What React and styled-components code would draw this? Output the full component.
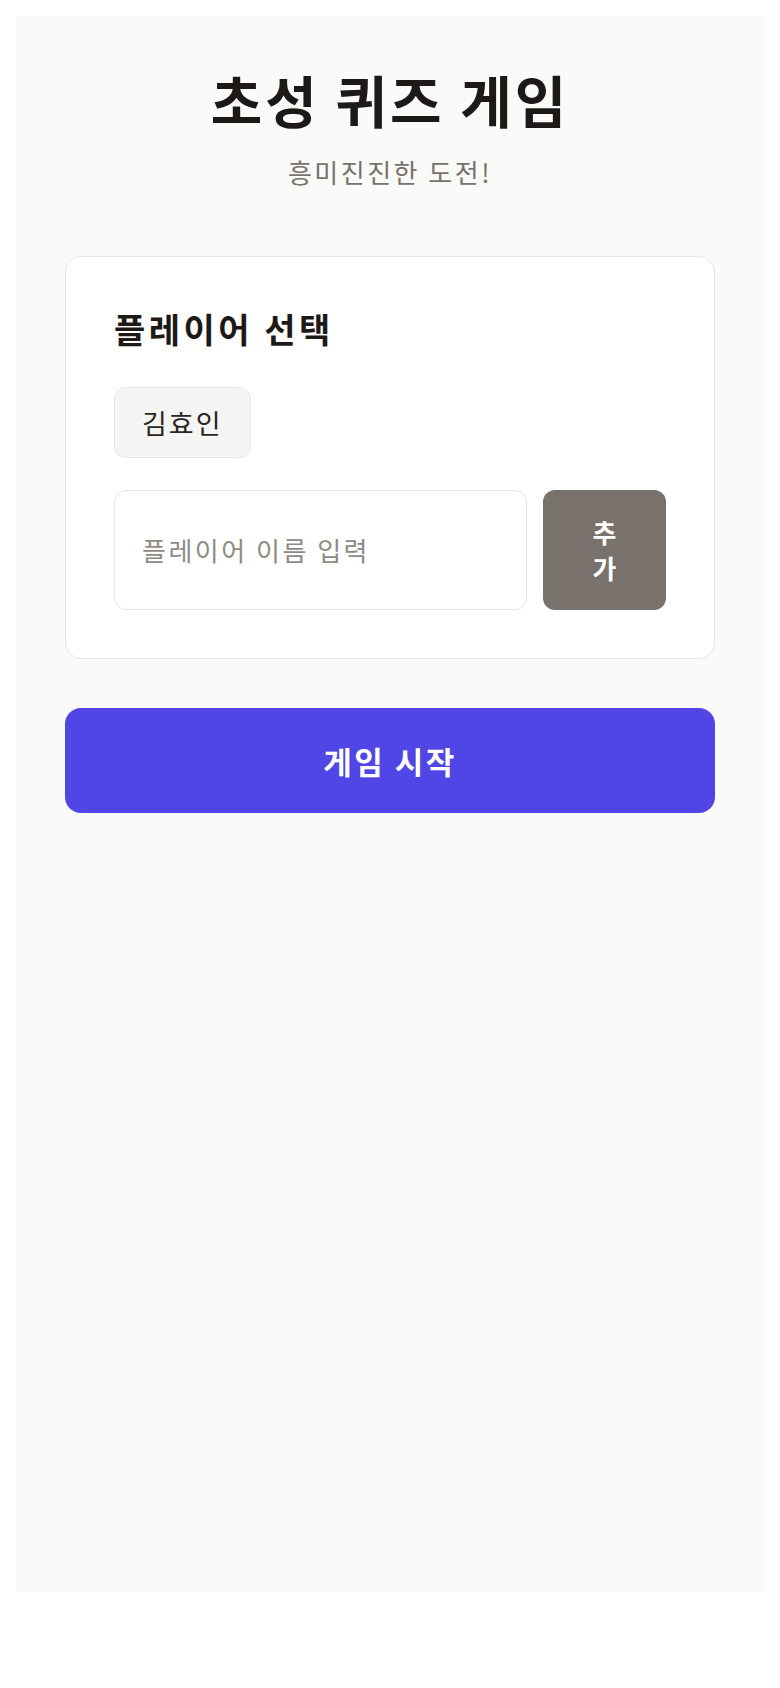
import React from 'react';
import styled, { createGlobalStyle } from 'styled-components';

const GlobalStyle = createGlobalStyle`
    html, body {
        margin: 0;
        padding: 0;
        background: #fff;
    }
    body {
        font-family: "Noto Sans CJK KR", "Noto Sans", sans-serif;
        color: #1c1917;
    }
    #root {
        padding: 16px;
    }
`

const Screen = styled.div`
    background-color: #fafaf9;
    min-height: 1576px;
    box-sizing: border-box;
    padding: 48px 0;
`

const Column = styled.div`
    width: 650px;
    margin: 0 auto;
    display: flex;
    flex-direction: column;
`

const Header = styled.header`
    text-align: center;
    margin-bottom: 66px;
`

const Title = styled.h1`
    margin: 0;
    font-size: 56px;
    font-weight: 700;
    line-height: 1.25;
    letter-spacing: 3px;
    color: #1c1917;
`

const Subtitle = styled.p`
    margin: 20px 0 0;
    font-size: 26px;
    line-height: 1.4;
    letter-spacing: 2.5px;
    color: #78716c;
`

const Card = styled.section`
    background-color: #fff;
    border: 1px solid #e7e5e4;
    border-radius: 16px;
    padding: 48px;
    display: flex;
    flex-direction: column;
`

const CardTitle = styled.h2`
    margin: 2px 0 35px;
    font-size: 34px;
    font-weight: 700;
    line-height: 1.3;
    letter-spacing: 3.5px;
    color: #1c1917;
`

const Players = styled.div`
    display: flex;
    flex-wrap: wrap;
    gap: 12px;
    margin-bottom: 32px;
`

const Chip = styled.span`
    display: inline-flex;
    align-items: center;
    height: 71px;
    box-sizing: border-box;
    padding: 0 27px;
    background-color: #f5f5f4;
    border: 1px solid #e7e5e4;
    border-radius: 12px;
    font-size: 27px;
    letter-spacing: 2px;
    color: #292524;
`

const AddRow = styled.div`
    display: flex;
    gap: 16px;
`

const NameInput = styled.input`
    flex: 1;
    min-width: 0;
    height: 120px;
    box-sizing: border-box;
    padding: 0 27px;
    border: 1px solid #e7e5e4;
    border-radius: 12px;
    background: #fff;
    font-family: inherit;
    font-size: 26px;
    letter-spacing: 2.5px;
    color: #1c1917;
    outline: none;

    &::placeholder {
        color: #8f8a86;
    }
`

const AddButton = styled.button`
    width: 123px;
    height: 120px;
    flex-shrink: 0;
    box-sizing: border-box;
    padding: 0 38px;
    border: none;
    border-radius: 12px;
    background-color: #78716c;
    color: #fff;
    font-family: inherit;
    font-size: 26px;
    font-weight: 700;
    line-height: 1.35;
`

const StartButton = styled.button`
    margin-top: 49px;
    height: 105px;
    border: none;
    border-radius: 16px;
    background-color: #4f46e5;
    color: #fff;
    font-family: inherit;
    font-size: 31px;
    font-weight: 700;
    letter-spacing: 2.5px;
`

const App = () => {
    return (
        <>
            <GlobalStyle />
            <Screen>
                <Column>
                    <Header>
                        <Title>초성 퀴즈 게임</Title>
                        <Subtitle>흥미진진한 도전!</Subtitle>
                    </Header>
                    <Card>
                        <CardTitle>플레이어 선택</CardTitle>
                        <Players>
                            <Chip>김효인</Chip>
                        </Players>
                        <AddRow>
                            <NameInput placeholder="플레이어 이름 입력" />
                            <AddButton>추가</AddButton>
                        </AddRow>
                    </Card>
                    <StartButton>게임 시작</StartButton>
                </Column>
            </Screen>
        </>
    );
}

export default App;
